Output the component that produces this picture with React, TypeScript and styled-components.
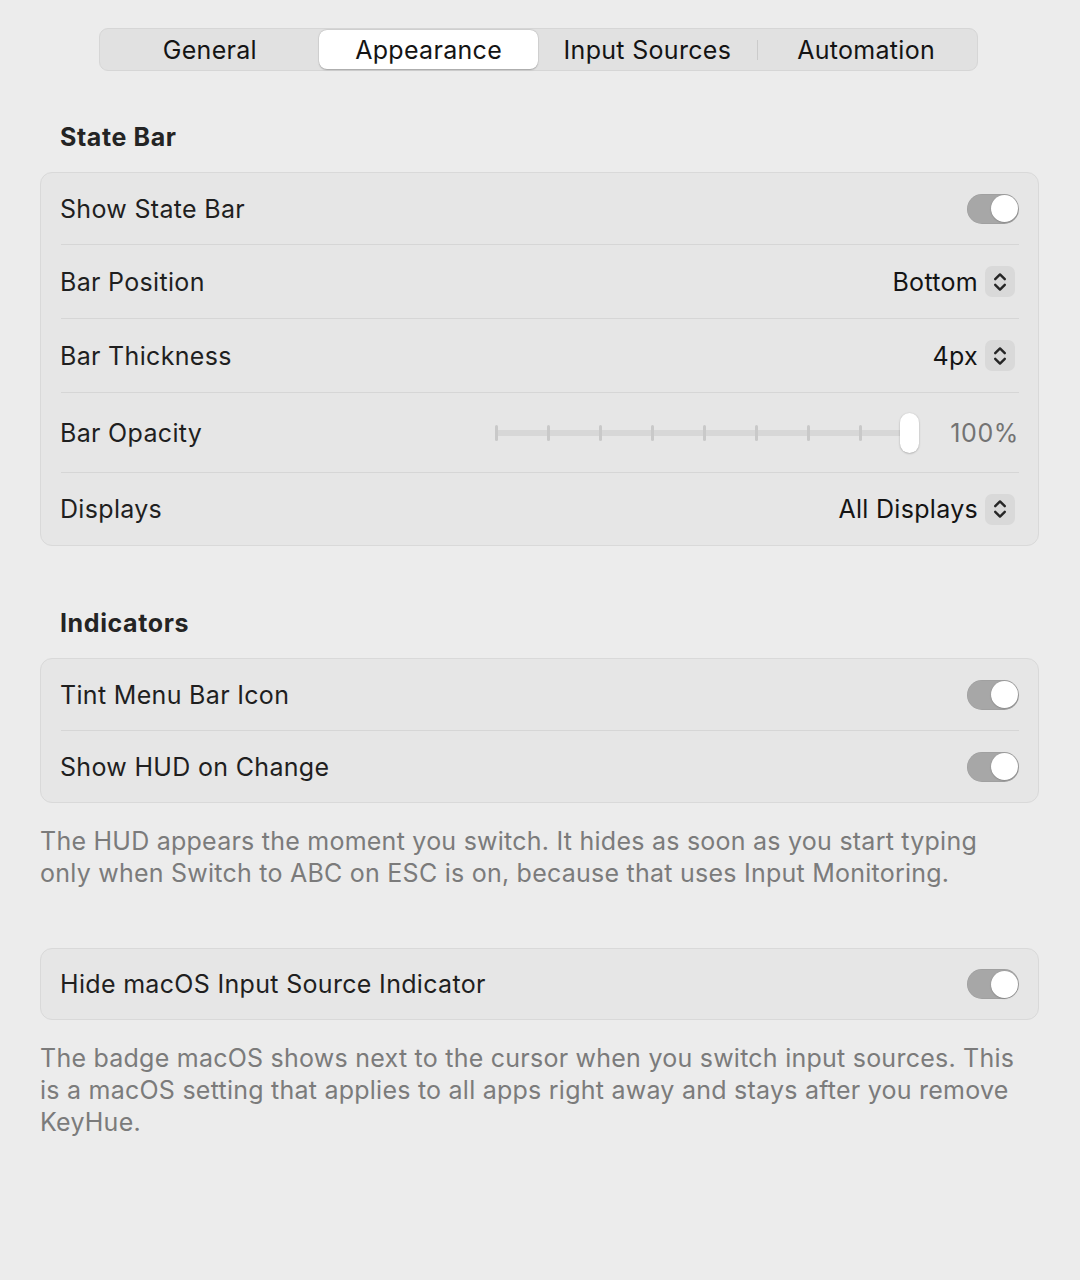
import React from "react";
import styled, { createGlobalStyle } from "styled-components";

const Global = createGlobalStyle`
  html, body {
    margin: 0;
    padding: 0;
    background: #ececec;
    min-height: 100vh;
  }
  body {
    font-family: Inter, "Noto Sans", "Liberation Sans", sans-serif;
    color: #1f1f1f;
    -webkit-font-smoothing: antialiased;
  }
`;

const Page = styled.div`
  padding: 28px 41px 40px 40px;
  display: flex;
  flex-direction: column;
`;

const TabBar = styled.div`
  align-self: center;
  width: 875px;
  height: 41px;
  margin-left: -3px;
  border: 1px solid #d6d6d6;
  background: #e1e1e1;
  border-radius: 9px;
  display: grid;
  grid-template-columns: repeat(4, 1fr);
  align-items: center;
  padding: 0 1px;
`;

const Tab = styled.div<{ $active?: boolean; $divider?: boolean }>`
  position: relative;
  height: 39px;
  display: flex;
  align-items: center;
  justify-content: center;
  font-size: 25px;
  letter-spacing: 0.3px;
  color: #141414;
  border-radius: 8px;
  background: ${(p) => (p.$active ? "#ffffff" : "transparent")};
  box-shadow: ${(p) =>
    p.$active ? "0 0.5px 1.5px rgba(0,0,0,0.25), 0 0 0 0.5px rgba(0,0,0,0.06)" : "none"};
  &::after {
    content: "";
    display: ${(p) => (p.$divider ? "block" : "none")};
    position: absolute;
    right: -1px;
    top: 10px;
    width: 1px;
    height: 20px;
    background: #cbcbcb;
  }
`;

const SectionTitle = styled.h2<{ $top: number }>`
  margin: ${(p) => p.$top}px 0 19px 20px;
  font-size: 25px;
  line-height: 32px;
  font-weight: 700;
  letter-spacing: 0.6px;
  color: #242424;
`;

const Card = styled.div<{ $top?: number }>`
  margin-top: ${(p) => p.$top ?? 0}px;
  background: #e6e6e6;
  border: 1px solid #d9d9d9;
  border-radius: 12px;
  display: flex;
  flex-direction: column;
`;

const Row = styled.div<{ $h: number }>`
  height: ${(p) => p.$h}px;
  padding: 0 19px 0 19px;
  display: flex;
  align-items: center;
  justify-content: space-between;
`;

const Separator = styled.div`
  height: 1px;
  margin: 0 19px 0 20px;
  background: #d6d6d6;
`;

const Label = styled.span`
  font-size: 25px;
  letter-spacing: 0.32px;
  color: #1f1f1f;
`;

const Toggle = styled.div`
  width: 52px;
  height: 30px;
  border-radius: 15px;
  background: #a7a7a7;
  position: relative;
  box-shadow: inset 0 0 0 0.5px rgba(0, 0, 0, 0.08);
  &::after {
    content: "";
    position: absolute;
    right: 1.5px;
    top: 1.5px;
    width: 27px;
    height: 27px;
    border-radius: 50%;
    background: #ffffff;
    box-shadow: 0 0.5px 1.5px rgba(0, 0, 0, 0.3);
  }
`;

const PopupWrap = styled.div`
  display: flex;
  align-items: center;
  gap: 7px;
  margin-right: 4px;
`;

const PopupValue = styled.span`
  font-size: 25px;
  letter-spacing: 0.3px;
  color: #141414;
`;

const StepperBox = styled.div`
  width: 30px;
  height: 31px;
  border-radius: 7px;
  background: #d9d9d9;
  display: flex;
  align-items: center;
  justify-content: center;
`;

const SliderWrap = styled.div`
  display: flex;
  align-items: center;
  gap: 30px;
`;

const Track = styled.div`
  position: relative;
  width: 425px;
  height: 40px;
`;

const TrackLine = styled.div`
  position: absolute;
  left: 0;
  right: 10px;
  top: 17px;
  height: 6px;
  border-radius: 3px;
  background: #d7d7d7;
`;

const Tick = styled.div`
  position: absolute;
  top: 12px;
  width: 3px;
  height: 16px;
  border-radius: 1.5px;
  background: #c9c9c9;
`;

const Knob = styled.div`
  position: absolute;
  right: 1px;
  top: 0;
  width: 19px;
  height: 40px;
  border-radius: 10px;
  background: #ffffff;
  box-shadow: 0 0.5px 2px rgba(0, 0, 0, 0.3);
`;

const Percent = styled.span`
  font-size: 25px;
  color: #737373;
  letter-spacing: 0.6px;
`;

const Note = styled.p`
  margin: 22px 0 0 0;
  font-size: 25px;
  line-height: 32px;
  color: #7b7b7b;
  letter-spacing: 0.24px;
`;

const Chevrons = () => (
  <svg width="16" height="24" viewBox="0 0 16 24" fill="none">
    <path d="M3.2 9.2 L8 4.4 L12.8 9.2" stroke="#262626" strokeWidth="2.4" strokeLinecap="round" strokeLinejoin="round" />
    <path d="M3.2 14.8 L8 19.6 L12.8 14.8" stroke="#262626" strokeWidth="2.4" strokeLinecap="round" strokeLinejoin="round" />
  </svg>
);

const Popup = ({ value }: { value: string }) => (
  <PopupWrap>
    <PopupValue>{value}</PopupValue>
    <StepperBox>
      <Chevrons />
    </StepperBox>
  </PopupWrap>
);

const Slider = () => (
  <SliderWrap>
    <Track>
      <TrackLine />
      {Array.from({ length: 8 }).map((_, i) => (
        <Tick key={i} style={{ left: `${i * 51.9}px` }} />
      ))}
      <Knob />
    </Track>
    <Percent>100%</Percent>
  </SliderWrap>
);

export default function App() {
  return (
    <>
      <Global />
      <Page>
        <TabBar>
          <Tab>General</Tab>
          <Tab $active>Appearance</Tab>
          <Tab $divider>Input Sources</Tab>
          <Tab>Automation</Tab>
        </TabBar>

        <SectionTitle $top={50}>State Bar</SectionTitle>
        <Card>
          <Row $h={71}>
            <Label>Show State Bar</Label>
            <Toggle />
          </Row>
          <Separator />
          <Row $h={73}>
            <Label>Bar Position</Label>
            <Popup value="Bottom" />
          </Row>
          <Separator />
          <Row $h={73}>
            <Label>Bar Thickness</Label>
            <Popup value="4px" />
          </Row>
          <Separator />
          <Row $h={79}>
            <Label>Bar Opacity</Label>
            <Slider />
          </Row>
          <Separator />
          <Row $h={72}>
            <Label>Displays</Label>
            <Popup value="All Displays" />
          </Row>
        </Card>

        <SectionTitle $top={61}>Indicators</SectionTitle>
        <Card>
          <Row $h={71}>
            <Label>Tint Menu Bar Icon</Label>
            <Toggle />
          </Row>
          <Separator />
          <Row $h={71}>
            <Label>Show HUD on Change</Label>
            <Toggle />
          </Row>
        </Card>
        <Note>
          The HUD appears the moment you switch. It hides as soon as you start typing
          <br />
          only when Switch to ABC on ESC is on, because that uses Input Monitoring.
        </Note>

        <Card $top={59}>
          <Row $h={70}>
            <Label>Hide macOS Input Source Indicator</Label>
            <Toggle />
          </Row>
        </Card>
        <Note>
          The badge macOS shows next to the cursor when you switch input sources. This
          <br />
          is a macOS setting that applies to all apps right away and stays after you remove
          <br />
          KeyHue.
        </Note>
      </Page>
    </>
  );
}
